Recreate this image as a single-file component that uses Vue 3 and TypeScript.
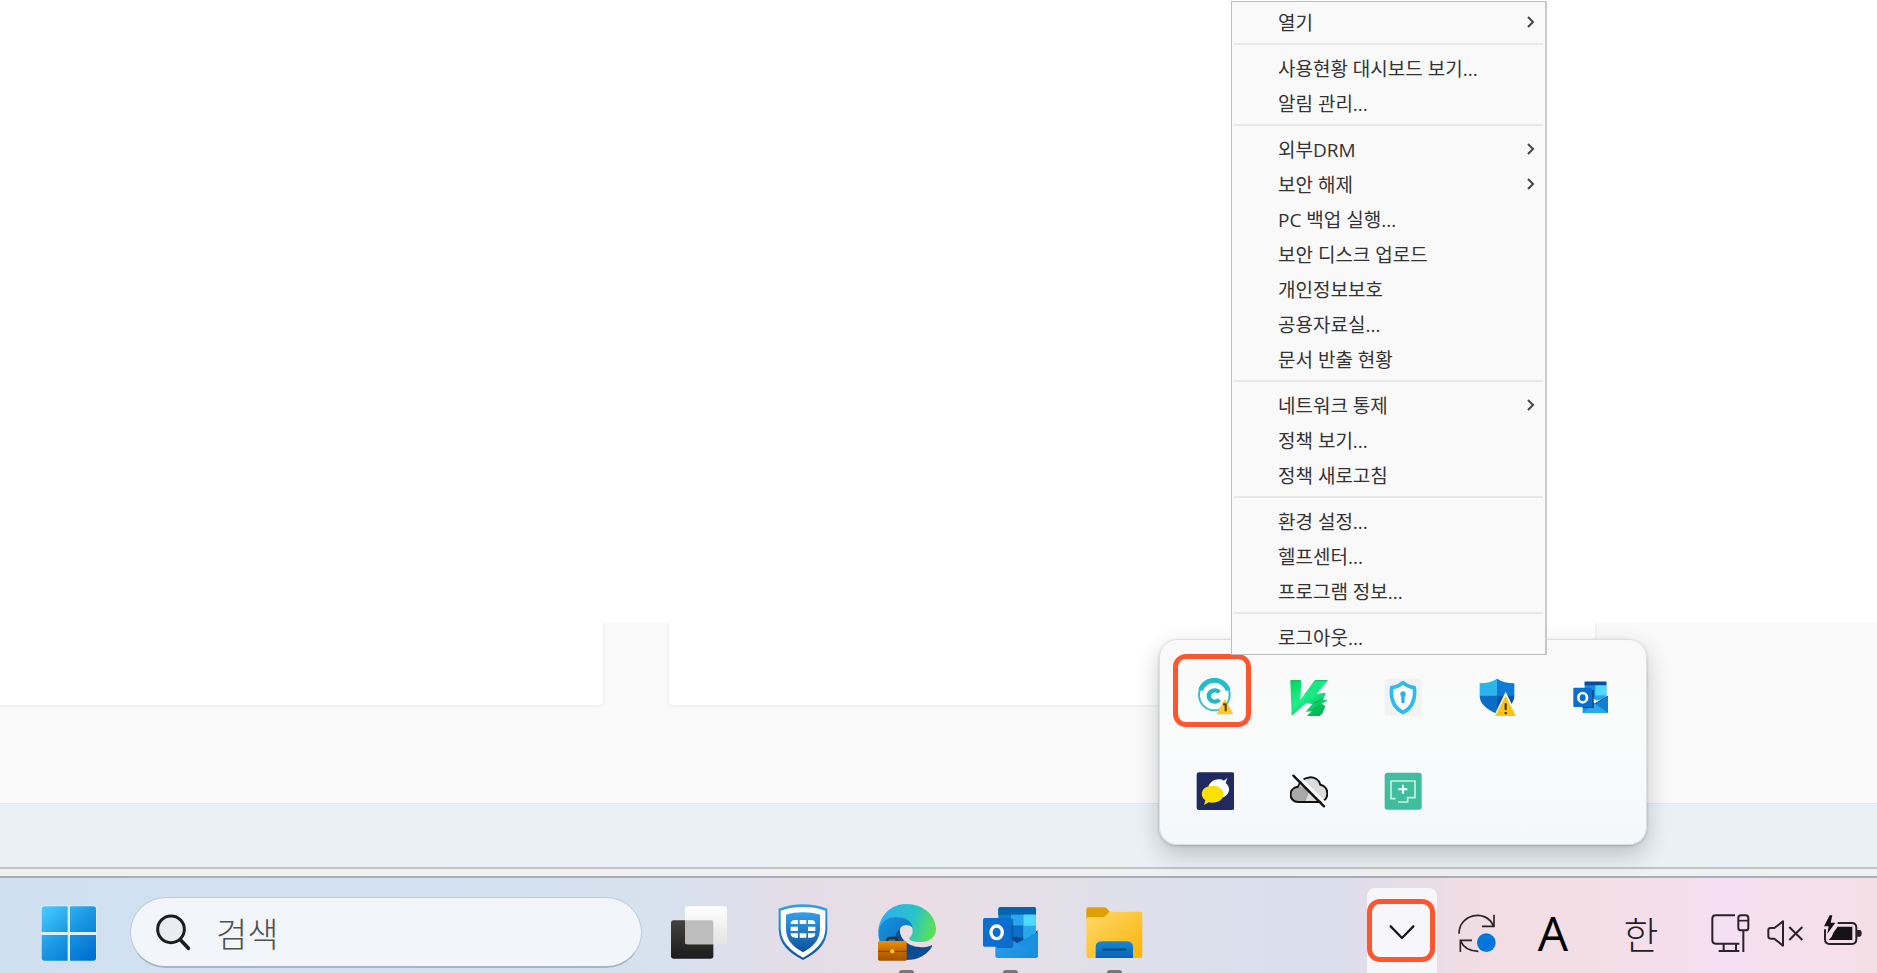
<script setup lang="ts">
import { ref } from 'vue'

interface MenuItem {
  label: string
  submenu?: boolean
}

const menuGroups: MenuItem[][] = [
  [{ label: '열기', submenu: true }],
  [{ label: '사용현황 대시보드 보기...' }, { label: '알림 관리...' }],
  [
    { label: '외부DRM', submenu: true },
    { label: '보안 해제', submenu: true },
    { label: 'PC 백업 실행...' },
    { label: '보안 디스크 업로드' },
    { label: '개인정보보호' },
    { label: '공용자료실...' },
    { label: '문서 반출 현황' },
  ],
  [
    { label: '네트워크 통제', submenu: true },
    { label: '정책 보기...' },
    { label: '정책 새로고침' },
  ],
  [{ label: '환경 설정...' }, { label: '헬프센터...' }, { label: '프로그램 정보...' }],
  [{ label: '로그아웃...' }],
]

const query = ref('')
</script>

<template>
  <div class="desktop">
    <main class="window">
      <div class="sheet"></div>
      <div class="cards">
        <div class="card card-left"></div>
        <div class="card card-main"></div>
      </div>
      <div class="band"></div>
      <div class="status"></div>
      <div class="edge"></div>
    </main>

    <section class="flyout" aria-label="숨겨진 아이콘">
      <button class="cell" type="button" aria-label="문서 보안">
        <svg viewBox="139 141 114 114">
          <circle cx="194" cy="192" r="46" fill="#fff" stroke="#35c0cb" stroke-width="6" />
          <path d="M153 178a43 43 0 0 1 82 0" fill="none" stroke="#1fbfc9" stroke-width="15" />
          <path d="M209 184a18 17 0 1 0 0 22" fill="none" stroke="#20b9c6" stroke-width="13" />
          <path d="M226 203l25 47h-51z" fill="#ffc830" />
          <path d="M220 220h8v21" fill="none" stroke="#463a18" stroke-width="6" />
        </svg>
        <span class="mark mark-icon"></span>
      </button>
      <button class="cell" type="button" aria-label="V3">
        <svg viewBox="422 141 114 114">
          <defs>
            <linearGradient id="v3" x1="0" y1="0" x2="0.7" y2="1">
              <stop offset="0" stop-color="#00d45f" />
              <stop offset=".5" stop-color="#1ff08b" />
              <stop offset="1" stop-color="#00b14f" />
            </linearGradient>
          </defs>
          <path d="M423 148h33l-3 58 43-58h40l-33 40 27-3-9 21 14 2-18 10 11 7-9 23-12 9h-37l17-16-18 1 20-23-18-3-44 39z" fill="url(#v3)" />
          <path d="M496 148h38l-80 80z" fill="#19e783" />
          <path d="M424 149h29M499 149h35" stroke="#0a9c4c" stroke-width="2" />
          <path d="M495 216l26-12M489 238l28-16" stroke="#05a34d" stroke-width="3" />
        </svg>
      </button>
      <button class="cell" type="button" aria-label="보안 연결">
        <svg viewBox="703 141 114 114">
          <rect x="705" y="143" width="111" height="111" rx="8" fill="#f1f2f3" />
          <path d="M760 155c10 9 21 13 34 15 4 36-7 61-34 74-27-13-38-38-34-74 13-2 24-6 34-15z" fill="#fff" stroke="#2eb9ef" stroke-width="11" stroke-linejoin="round" />
          <circle cx="760" cy="189" r="8" fill="#2eaeea" />
          <path d="M760 189v23" stroke="#2eaeea" stroke-width="10" stroke-linecap="round" />
        </svg>
      </button>
      <button class="cell" type="button" aria-label="Windows 보안">
        <svg viewBox="235 141 114 114">
          <path d="M292 143c-14 9-31 14-52 14v38h52z" fill="#2bb5ea" />
          <path d="M292 143c14 9 31 14 52 14v38h-52z" fill="#0c7cd5" />
          <path d="M240 194h52v54c-34-14-52-32-52-54z" fill="#0b6cc4" />
          <path d="M292 194h52c0 22-18 40-52 54z" fill="#0755a4" />
          <path d="M318 182l35 73h-70z" fill="#fff" />
          <path d="M318 196l30 59h-61z" fill="#ffc218" stroke="#ffc218" stroke-width="2" />
          <path d="M318 217v20M318 243v7" stroke="#382c00" stroke-width="6" />
        </svg>
      </button>
      <button class="cell" type="button" aria-label="Outlook">
        <svg viewBox="517 141 114 114">
          <path d="M555 152h65v52h-65z" fill="#1490df" />
          <path d="M555 152h65v11h-65z" fill="#0a4ba0" />
          <path d="M587 163h33v31h-33z" fill="#50d9ff" />
          <path d="M587 194h33v14h-33z" fill="#28a8ea" />
          <path d="M549 208l38 9 38-21v50h-76z" fill="#1a8fe0" />
          <path d="M625 196v50l-39-28z" fill="#1380cf" />
          <path d="M549 246l37-28 39 28z" fill="#2aa9ee" />
          <path d="M625 196l-39 22" stroke="#0b5ea8" stroke-width="3" />
          <path d="M555 177h27v54h-33z" fill="#083f7d" />
          <rect x="521" y="170" width="57" height="58" rx="3" fill="#0b6fd0" />
          <ellipse cx="549" cy="200" rx="13" ry="14" fill="none" stroke="#fff" stroke-width="8" />
        </svg>
      </button>
      <button class="cell" type="button" aria-label="메신저">
        <svg viewBox="139 423 114 114">
          <rect x="141" y="424" width="113" height="113" rx="7" fill="#202960" />
          <path d="M233 441l-5 15c16 12 12 33-4 41-22 9-50-5-48-28 3-20 29-31 47-20z" fill="#fff" />
          <path d="M163 522l4-14c-16-12-14-34 6-41 23-8 50 3 49 24-2 18-24 27-45 23z" fill="#fae100" />
        </svg>
      </button>
      <button class="cell" type="button" aria-label="OneDrive">
        <svg viewBox="422 423 114 114">
          <path d="M447 513c-30 0-32-42-1-46 10-34 58-38 67-6 29 6 28 50-3 52z" fill="#dcdcdc" />
          <path d="M447 513c-30 0-32-42-1-46 12-2 24 4 34 14l-12 32z" fill="#a8a8a8" />
          <path d="M447 513c-30 0-32-42-1-46 10-34 58-38 67-6 29 6 28 50-3 52z" fill="none" stroke="#111" stroke-width="6" />
          <path d="M439 428l95 95" stroke="#f9fafa" stroke-width="9" />
          <path d="M432 434l92 92" stroke="#111" stroke-width="7" stroke-linecap="round" />
        </svg>
      </button>
      <button class="cell" type="button" aria-label="원격 지원">
        <svg viewBox="703 423 114 114">
          <rect x="705" y="425" width="111" height="111" rx="8" fill="#3fbd9e" />
          <path d="M738 503h-14v-53h72v50h-22v13h-29" fill="none" stroke="#c9f0e4" stroke-width="5" />
          <path d="M760 461v27M746 475h27" stroke="#fff" stroke-width="6" />
        </svg>
      </button>
    </section>

    <nav class="menu" role="menu" aria-label="문서 보안 메뉴">
      <div v-for="(group, g) in menuGroups" :key="g" class="group" role="group">
        <button v-for="item in group" :key="item.label" class="item" type="button" role="menuitem">
          <span class="label">{{ item.label }}</span>
          <svg v-if="item.submenu" class="more" viewBox="0 0 8 12">
            <path d="M1 1l5 5-5 5" fill="none" stroke="#444" stroke-width="2" />
          </svg>
        </button>
      </div>
    </nav>

    <footer class="taskbar">
      <button class="start" type="button" aria-label="시작">
        <svg viewBox="118 129 180 180">
          <defs>
            <linearGradient id="win" gradientUnits="userSpaceOnUse" x1="130" y1="140" x2="270" y2="300">
              <stop offset="0" stop-color="#48ccff" />
              <stop offset=".5" stop-color="#1a98e4" />
              <stop offset="1" stop-color="#0070d2" />
            </linearGradient>
          </defs>
          <rect x="124" y="136" width="168" height="168" rx="10" fill="#dfebf6" />
          <path d="M134 139h70v77h-78v-69q0-8 8-8zM211 139h70q8 0 8 8v69h-78zM126 225h78v77h-70q-8 0-8-8zM211 225h78v69q0 8-8 8h-70z" fill="url(#win)" />
        </svg>
      </button>

      <label class="search">
        <svg viewBox="460 157 120 120">
          <circle cx="514" cy="209" r="40" fill="#e9edf1" stroke="#1d1d1d" stroke-width="9" />
          <path d="M542 240l24 26" stroke="#1d1d1d" stroke-width="11" stroke-linecap="round" />
        </svg>
        <input v-model="query" type="text" placeholder="검색" aria-label="검색" />
      </label>

      <div class="apps">
        <button class="app" type="button" aria-label="작업 보기">
          <svg viewBox="210 129 180 180">
            <defs>
              <linearGradient id="tvBack" x1="0" y1="0" x2="0" y2="1">
                <stop offset="0" stop-color="#444240" />
                <stop offset="1" stop-color="#1c1c1c" />
              </linearGradient>
              <linearGradient id="tvFront" x1="0" y1="0" x2="0" y2="1">
                <stop offset="0" stop-color="#fff" />
                <stop offset="1" stop-color="#e3e3e3" />
              </linearGradient>
            </defs>
            <rect x="216" y="181" width="127" height="115" rx="7" fill="url(#tvBack)" />
            <rect x="258" y="139" width="126" height="114" rx="7" fill="url(#tvFront)" />
            <path d="M258 181h79q6 0 6 6v66h-79q-6 0-6-6z" fill="#bdbdbd" />
          </svg>
        </button>
        <button class="app" type="button" aria-label="FortiClient">
          <svg viewBox="520 129 180 180">
            <defs>
              <linearGradient id="forti" x1="0" y1="0" x2="0" y2="1">
                <stop offset="0" stop-color="#34a0ee" />
                <stop offset="1" stop-color="#0a5299" />
              </linearGradient>
            </defs>
            <path d="M610 133c24 0 50 4 73 13v62c-2 44-28 70-73 92-45-22-71-48-73-92v-62c23-9 49-13 73-13z" fill="url(#forti)" />
            <path d="M610 141c23 0 46 3 67 11v56c-2 38-26 62-67 85-41-23-65-47-67-85v-56c21-8 44-11 67-11z" fill="#fff" />
            <path d="M610 157c18 0 35 2 51 7v44c-1 32-19 51-51 69-32-18-50-37-51-69v-44c16-5 33-7 51-7z" fill="url(#forti)" />
            <path d="M586 180h9v12h-22q0-12 13-12zM600 180h20v12h-20zM625 180h9q13 0 13 12h-22zM573 200h22v13h-22zM625 200h22v13h-22zM573 220h22v13h-9q-13 0-13-13zM600 220h20v13h-20zM625 220h22q0 13-13 13h-9z" fill="#fff" />
          </svg>
        </button>
        <button class="app running" type="button" aria-label="Microsoft Edge">
          <svg viewBox="51 129 180 180">
            <defs>
              <linearGradient id="edgeTop" gradientUnits="userSpaceOnUse" x1="60" y1="170" x2="228" y2="225">
                <stop offset="0" stop-color="#2eaff0" />
                <stop offset=".55" stop-color="#29c3c8" />
                <stop offset=".8" stop-color="#4cd779" />
                <stop offset="1" stop-color="#66e04d" />
              </linearGradient>
              <linearGradient id="edgeMid" x1="0" y1="0" x2="1" y2="1">
                <stop offset="0" stop-color="#1596e0" />
                <stop offset="1" stop-color="#0b62b6" />
              </linearGradient>
              <linearGradient id="case" x1="0" y1="0" x2="0" y2="1">
                <stop offset="0" stop-color="#f09000" />
                <stop offset=".5" stop-color="#c76a00" />
                <stop offset="1" stop-color="#a55100" />
              </linearGradient>
            </defs>
            <path d="M55 217c0-48 37-85 84-85 52 0 89 35 89 76 0 22-18 38-43 38-18 0-37-3-37-10 0-5 10-8 10-22 0-25-22-42-50-42-27 0-47 17-53 45z" fill="url(#edgeTop)" />
            <path d="M55 217c3-28 24-46 52-46 28 0 48 12 51 32-6-6-12-8-20-8-14 0-21 12-19 26 3 24 20 41 44 45l-24 35c-50 0-84-36-84-84z" fill="url(#edgeMid)" />
            <path d="M119 208c-26 19-13 80 20 92 35 0 58-14 75-37 3-4 4-9-2-6-45 15-93-8-93-49z" fill="#0d4c94" />
            <path d="M82 246v-6q0-6 7-6h16q7 0 7 6v6" fill="none" stroke="#3b2b20" stroke-width="7" />
            <rect x="54" y="243" width="86" height="59" rx="4" fill="url(#case)" />
            <path d="M54 274h86" stroke="#7d3d00" stroke-width="3" />
            <circle cx="97" cy="274" r="6" fill="#ffd62e" />
          </svg>
        </button>
        <button class="app running" type="button" aria-label="Outlook">
          <svg viewBox="363 129 180 180">
            <defs>
              <linearGradient id="olFlap" x1="0" y1="0" x2="1" y2="1">
                <stop offset="0" stop-color="#2fa5ea" />
                <stop offset="1" stop-color="#1789e0" />
              </linearGradient>
            </defs>
            <path d="M415 148q0-7 7-7h99q7 0 7 7v105H415z" fill="#0f78d0" />
            <path d="M415 148q0-7 7-7h99q7 0 7 7v16H415z" fill="#0364b0" />
            <path d="M453 164h38v33h-38z" fill="#28a8ea" />
            <path d="M491 164h36v33h-36z" fill="#50d9ff" />
            <path d="M491 197h36v34h-36z" fill="#28a8ea" />
            <path d="M453 197h38v34h-38z" fill="#0b70c8" />
            <path d="M450 231h42l35-16 6-4v20l-62 20z" fill="#0b4a90" />
            <path d="M527 164v55l-36 20v-42h0v-33z" fill="#50d9ff" />
            <path d="M491 197h36v22l-36 20z" fill="#28a8ea" />
            <path d="M406 213l65 37 63-33v70q0 7-7 7H413q-7 0-7-7z" fill="url(#olFlap)" />
            <path d="M471 250l63 42v-75z" fill="#1a90df" />
            <path d="M430 176h30v82q0 6-6 6h-44z" fill="#0a4c93" opacity=".6" />
            <rect x="369" y="174" width="85" height="86" rx="5" fill="#0c6fd0" />
            <ellipse cx="410" cy="217" rx="17" ry="19" fill="none" stroke="#fff" stroke-width="10" />
          </svg>
        </button>
        <button class="app running" type="button" aria-label="파일 탐색기">
          <svg viewBox="675 129 180 180">
            <defs>
              <linearGradient id="folder" x1="0" y1="0" x2="1" y2="1">
                <stop offset="0" stop-color="#ffd768" />
                <stop offset="1" stop-color="#f9b50a" />
              </linearGradient>
              <linearGradient id="tray" x1="0" y1="0" x2="0" y2="1">
                <stop offset="0" stop-color="#1788d6" />
                <stop offset="1" stop-color="#0863b5" />
              </linearGradient>
            </defs>
            <path d="M679 149q0-7 7-7h46q5 0 9 4l10 11v20h-72z" fill="#dfa004" />
            <path d="M679 177q0-5 5-5h41q7 0 12-5l8-8q3-4 8-4h88q6 0 6 6v127q0 6-6 6H685q-6 0-6-6z" fill="url(#folder)" />
            <path d="M707 294v-32q0-18 18-18h76q18 0 18 18v32z" fill="url(#tray)" />
            <path d="M730 269h66" stroke="#064a86" stroke-width="7" stroke-linecap="round" />
          </svg>
        </button>
      </div>

      <div class="tray">
        <button class="toggle" type="button" aria-label="숨겨진 아이콘 표시">
          <svg viewBox="120 150 132 132">
            <path d="M152 202l34 35 34-35" fill="none" stroke="#1a1a1a" stroke-width="7" stroke-linecap="round" stroke-linejoin="round" />
          </svg>
          <span class="mark mark-toggle"></span>
        </button>
        <button class="tray-item sync" type="button" aria-label="업데이트">
          <svg viewBox="345 150 132 132">
            <path d="M357 218c0-58 80-76 103-24M462 161v35h-36M415 271c-25 0-45-12-54-32M361 273v-35h35" fill="none" stroke="#2b2528" stroke-width="5" />
            <circle cx="439" cy="245" r="28" fill="#0078da" />
          </svg>
        </button>
        <button class="tray-item latin" type="button">A</button>
        <button class="tray-item hangul" type="button">한</button>
        <div class="system">
          <button class="tray-item network" type="button" aria-label="네트워크">
            <svg viewBox="327 150 132 132">
              <path d="M405 163h-58q-10 0-10 10v65q0 10 10 10h71M371 250v19M408 250v19M356 270h62" fill="none" stroke="#2a222a" stroke-width="6" />
              <path d="M430 208v65" stroke="#2a222a" stroke-width="6" />
              <rect x="415" y="163" width="30" height="45" rx="8" fill="none" stroke="#2a222a" stroke-width="6" />
              <path d="M415 179h30" stroke="#2a222a" stroke-width="5" />
            </svg>
          </button>
          <button class="tray-item volume" type="button" aria-label="음소거">
            <svg viewBox="489 150 132 132">
              <path d="M549 181l-26 20h-11q-7 0-7 7v18q0 7 7 7h11l26 21z" fill="none" stroke="#2a222a" stroke-width="6" stroke-linejoin="round" />
              <path d="M568 198l39 39M607 198l-39 39" stroke="#2a222a" stroke-width="6" />
            </svg>
          </button>
          <button class="tray-item battery" type="button" aria-label="배터리">
            <svg viewBox="663 150 132 132">
              <path d="M713 186h42q14 0 14 14v35q0 14-14 14h-66q-14 0-14-14v-30" fill="none" stroke="#2a222a" stroke-width="6" />
              <path d="M713 197h44v40h-71q10-7 14-22z" fill="#161216" />
              <path d="M771 207h8q6 0 6 10t-6 10h-8z" fill="#2a222a" />
              <path d="M689 163l-17 33h14l-4 22 24-33h-14l5-22z" fill="#161216" />
            </svg>
          </button>
        </div>
      </div>
    </footer>
  </div>
</template>

<style>
body {
  margin: 0;
}
</style>

<style scoped>
.desktop {
  position: relative;
  display: flex;
  flex-direction: column;
  min-height: 100vh;
  overflow: hidden;
  background: #fff;
  font-family: "Open Sans", "Noto Sans CJK KR", sans-serif;
  color: #222;
}

button {
  margin: 0;
  padding: 0;
  border: 0;
  background: none;
  font: inherit;
  color: inherit;
}

svg {
  display: block;
}

/* Application window behind the taskbar */
.window {
  flex: 1;
  display: flex;
  flex-direction: column;
}

.sheet {
  flex: 1;
}

.cards {
  display: grid;
  grid-template-columns: 605px 1fr;
  column-gap: 62px;
  height: 84px;
  padding-right: 280px;
  background: #f9f9f9;
}

.card {
  box-sizing: border-box;
  background: #fff;
  border-bottom: 2px solid #f2f2f2;
}

.card-left {
  border-right: 2px solid #f2f2f2;
  border-bottom-right-radius: 6px;
}

.card-main {
  border-left: 2px solid #f2f2f2;
  border-right: 2px solid #f2f2f2;
  border-radius: 0 0 6px 6px;
}

.band {
  height: 96px;
  background: #f9f9f9;
}

.status {
  box-sizing: border-box;
  height: 64px;
  border-top: 1px solid #e0e8e8;
  background: #eaf0f4;
}

.edge {
  box-sizing: border-box;
  height: 11px;
  border-top: 2px solid #c2c3c4;
  border-bottom: 2px solid #a9adb5;
  background: #f0f0f0;
}

/* Hidden-icons flyout */
.flyout {
  position: absolute;
  right: 230px;
  bottom: 128px;
  box-sizing: border-box;
  width: 488px;
  height: 206px;
  padding: 10px 8px 6px;
  display: grid;
  grid-template-columns: repeat(5, 94px);
  grid-auto-rows: 94px;
  border: 1px solid #dcdedf;
  border-radius: 18px;
  background: linear-gradient(#f9f9f9, #fafbfb 50%, #f3f8fb);
  box-shadow: 0 10px 24px rgba(0, 0, 0, 0.2), 0 1px 3px rgba(0, 0, 0, 0.2);
}

.cell {
  position: relative;
  display: grid;
  place-items: center;
}

.cell svg {
  width: 38px;
  height: 38px;
}

.mark {
  position: absolute;
  box-sizing: border-box;
  border: 5px solid #ff5630;
  border-radius: 13px;
}

.mark-icon {
  top: 4px;
  left: 5px;
  width: 78px;
  height: 73px;
}

.mark-toggle {
  top: 11px;
  left: 0;
  width: 68px;
  height: 63px;
}

/* Context menu */
.menu {
  position: absolute;
  right: 330px;
  bottom: 318px;
  box-sizing: border-box;
  width: 316px;
  padding: 2px 2px 0;
  border: 1px solid #bdbdbd;
  border-right: 2px solid #c8c8c8;
  background: #f9f9f9;
}

.group + .group {
  margin-top: 4px;
  padding-top: 5px;
  border-top: 2px solid #e8e8e8;
}

.item {
  display: flex;
  align-items: center;
  justify-content: space-between;
  width: 100%;
  height: 35px;
  padding: 0 8px 0 44px;
  font-size: 19px;
  line-height: 32px;
  text-align: left;
  white-space: nowrap;
  color: #333;
}

.label {
  padding-top: 3px;
}

.more {
  width: 8px;
  height: 12px;
}

/* Taskbar */
.taskbar {
  position: relative;
  box-sizing: border-box;
  height: 95px;
  padding: 14px 0 0 39px;
  display: flex;
  align-items: center;
  background: linear-gradient(
    90deg,
    #d0e0f0 0%,
    #d2e1f0 25%,
    #d9e1ee 36%,
    #e5dde7 44%,
    #ebdde4 49%,
    #e2dfe8 56%,
    #dae0ee 67%,
    #dbdeec 71%,
    #f0dde3 78%,
    #f4dee5 85%,
    #f5dff3 92%,
    #f5dfe6 100%
  );
}

.start svg,
.app svg {
  width: 60px;
  height: 60px;
}

.search {
  box-sizing: border-box;
  display: flex;
  align-items: center;
  gap: 23px;
  width: 512px;
  height: 71px;
  margin-left: 31px;
  padding: 0 22px;
  border: 1px solid #bccbdb;
  border-bottom: 2px solid #a9b4c2;
  border-radius: 36px;
  background: #f2f6fb;
}

.search svg {
  flex: none;
  width: 40px;
  height: 40px;
}

.search input {
  flex: 1;
  min-width: 0;
  height: 50px;
  padding: 0;
  border: 0;
  outline: 0;
  background: none;
  font: 300 34px "Noto Sans CJK KR", sans-serif;
  color: #333;
}

.search input::placeholder {
  color: #505050;
  opacity: 1;
}

.apps {
  display: flex;
  align-self: stretch;
  gap: 40px;
  margin-left: 25px;
}

.app {
  position: relative;
  display: grid;
  place-items: center;
  width: 64px;
}

.running::after {
  content: "";
  position: absolute;
  bottom: 0;
  left: 24px;
  width: 15px;
  height: 3px;
  border-radius: 3px 3px 0 0;
  background: #77747a;
}

.tray {
  display: flex;
  align-self: stretch;
  align-items: center;
  margin-left: auto;
}

.toggle {
  position: relative;
  align-self: flex-end;
  display: grid;
  place-items: center;
  flex: none;
  width: 70px;
  height: 85px;
  border-radius: 8px 8px 0 0;
  background: #f6f6fb;
}

.tray svg {
  width: 44px;
  height: 44px;
}

.tray-item {
  display: grid;
  place-items: center;
}

.sync {
  width: 80px;
}

.latin {
  width: 72px;
  font-size: 48px;
  line-height: 48px;
  color: #000;
}

.hangul {
  width: 104px;
  font-family: "Noto Sans CJK KR", sans-serif;
  font-size: 38px;
  font-weight: 300;
  line-height: 40px;
}

.system {
  display: flex;
  margin-left: 8px;
}

.network {
  width: 60px;
}

.volume {
  width: 48px;
}

.battery {
  width: 68px;
}
</style>
